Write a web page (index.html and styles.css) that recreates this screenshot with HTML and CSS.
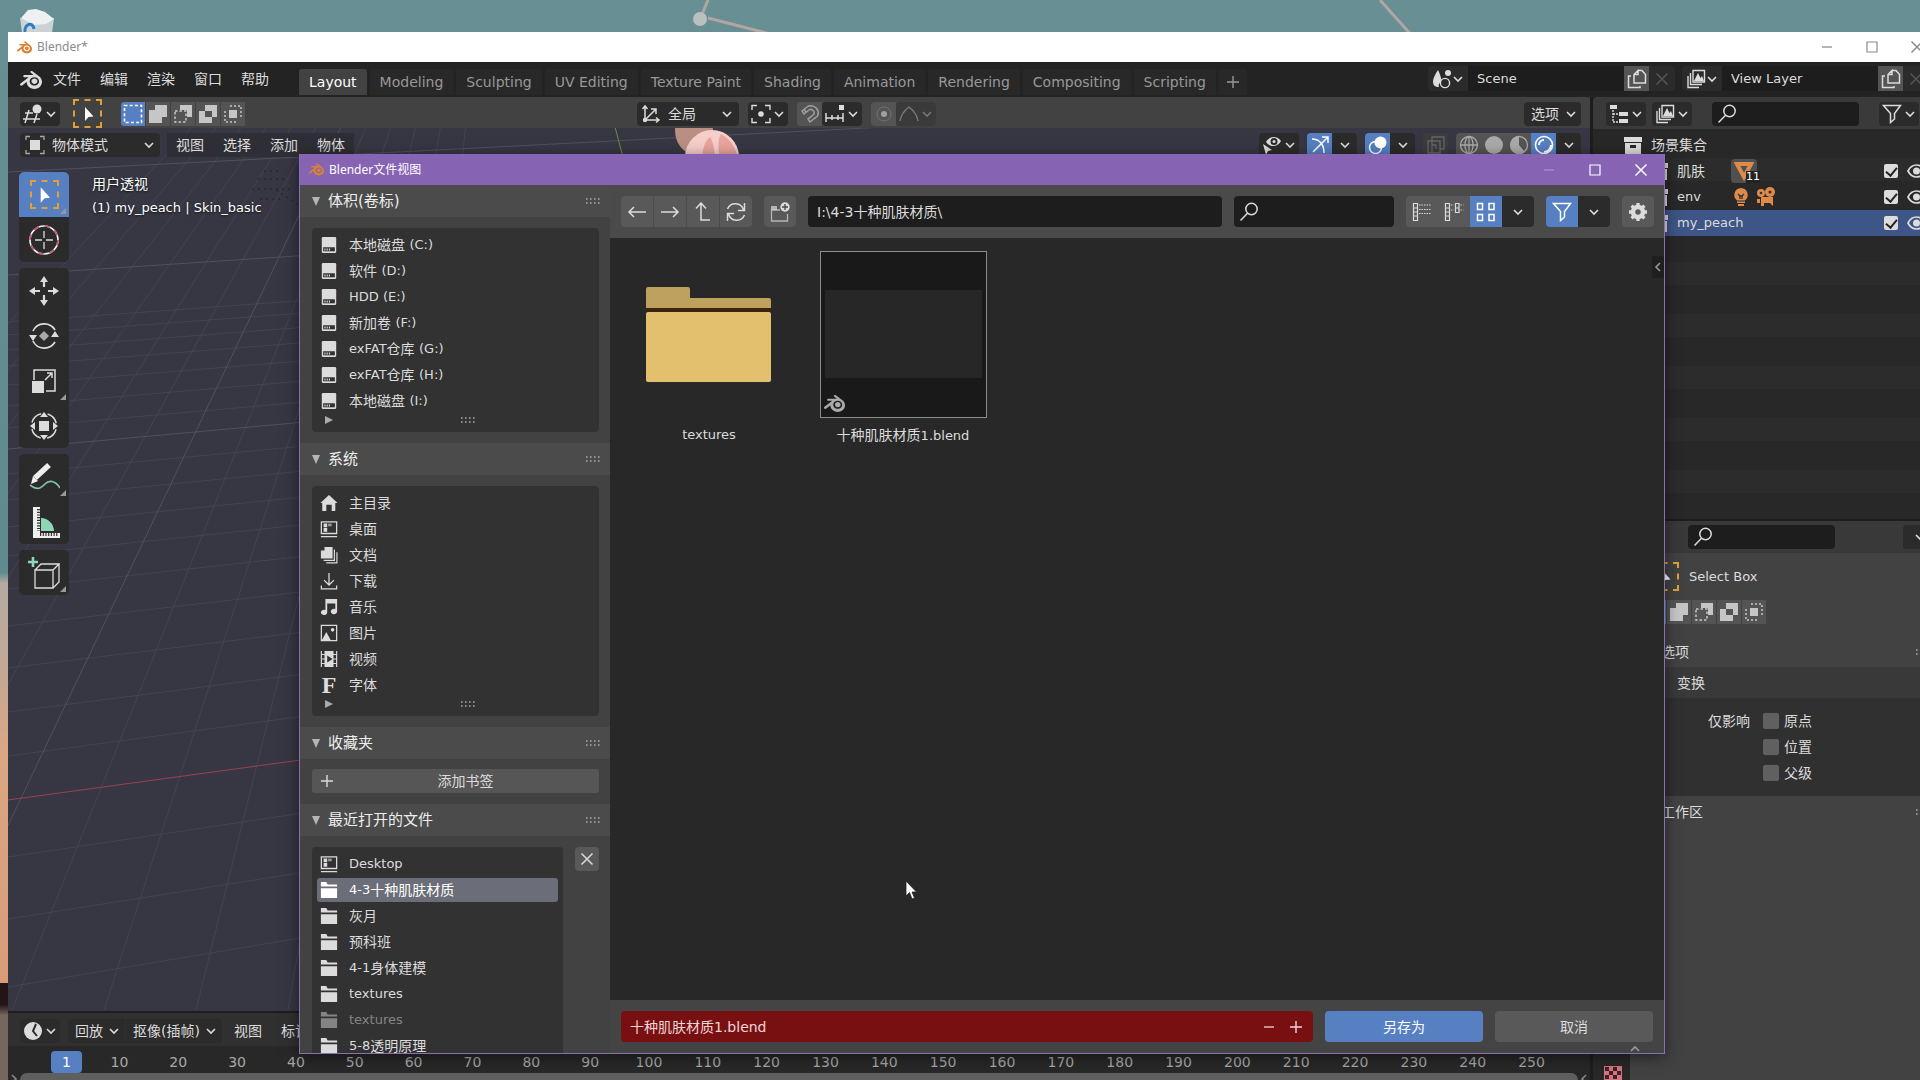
FILE: index.html
```html
<!DOCTYPE html>
<html lang="zh-CN">

<head>
    <meta charset="UTF-8">
    <meta name="viewport" content="width=device-width, initial-scale=1.0">
    <title>Blender</title>
    <link rel="stylesheet" href="styles.css">
</head>

<body>

    <!-- Icon set -->
    <svg class="icon-set" aria-hidden="true">
        <symbol id="blender" viewBox="0 0 24 24"><path fill="currentColor" d="M12.51 13.214c.046-.8.438-1.506 1.03-2.006a3.424 3.424 0 0 1 2.212-.79c.85 0 1.631.3 2.211.79.592.5.983 1.206 1.028 2.005.045.823-.285 1.586-.865 2.153a3.389 3.389 0 0 1-2.374.938 3.393 3.393 0 0 1-2.376-.938c-.58-.567-.91-1.33-.865-2.152M7.35 14.831c.006.314.106.922.256 1.398a7.372 7.372 0 0 0 1.593 2.757 8.227 8.227 0 0 0 2.787 2.001 8.947 8.947 0 0 0 3.66.76 8.964 8.964 0 0 0 3.657-.772 8.285 8.285 0 0 0 2.785-2.01 7.428 7.428 0 0 0 1.592-2.762 6.964 6.964 0 0 0 .25-3.074 7.123 7.123 0 0 0-1.016-2.779 7.764 7.764 0 0 0-1.852-2.043h.002L13.566 2.55l-.02-.015c-.492-.378-1.319-.376-1.86.002-.547.382-.609 1.015-.123 1.415l-.001.001 3.126 2.543-9.53.01h-.013c-.788.001-1.545.518-1.695 1.172-.154.665.38 1.217 1.2 1.22V8.9l4.83-.01-8.62 6.617-.034.025c-.813.622-1.075 1.658-.563 2.313.52.667 1.625.668 2.447.004L7.414 14s-.069.52-.063.831zm12.09 1.741c-.97.988-2.326 1.548-3.795 1.55-1.47.004-2.827-.552-3.797-1.538a4.51 4.51 0 0 1-1.036-1.622 4.282 4.282 0 0 1 .282-3.519 4.702 4.702 0 0 1 1.153-1.371c.942-.768 2.141-1.183 3.396-1.185 1.256-.002 2.455.41 3.398 1.175.48.391.87.854 1.152 1.367a4.28 4.28 0 0 1 .522 1.706 4.236 4.236 0 0 1-.239 1.811 4.54 4.54 0 0 1-1.035 1.626"/></symbol>
        <symbol id="chevron" viewBox="0 0 12 12"><path fill="none" stroke="currentColor" stroke-width="1.6" d="M2 4l4 4 4-4"/></symbol>
        <symbol id="grip" viewBox="0 0 16 8"><path stroke="currentColor" stroke-width="1.6" stroke-dasharray="1.6 2.4" d="M1 2h15M1 6h15"/></symbol>
        <symbol id="search" viewBox="0 0 20 20"><g fill="none" stroke="currentColor" stroke-width="1.5"><circle cx="12.5" cy="7" r="5.7"/><path d="M8.500 11.200L1.500 18.500"/></g></symbol>
        <symbol id="arrow" viewBox="0 0 20 20"><path fill="currentColor" d="M7 3v14l3.500-4 5-.5z"/></symbol>
        <symbol id="editor-3d" viewBox="0 0 20 20"><path fill="none" stroke="currentColor" stroke-width="1.500" d="M2 9h8M0 15h17M6 6L2 19M14 10l-3 9"/><circle fill="currentColor" cx="14" cy="5" r="4.500"/></symbol>
        <symbol id="sel-new" viewBox="0 0 20 20"><rect x="1.500" y="1.500" width="17" height="17" fill="none" stroke="currentColor" stroke-width="1.600" stroke-dasharray="3 2.200"/></symbol>
        <symbol id="sel-add" viewBox="0 0 20 20"><path fill="currentColor" d="M7 1h12v12h-5v6H1V6h6z"/></symbol>
        <symbol id="sel-sub" viewBox="0 0 20 20"><path fill="currentColor" d="M7 1h12v12h-5V6H7z"/><path fill="none" stroke="currentColor" stroke-width="1.500" stroke-dasharray="2.500 2" d="M2 7h11v11H2z"/></symbol>
        <symbol id="sel-diff" viewBox="0 0 20 20"><path fill="currentColor" fill-rule="evenodd" d="M7 1h12v12h-5v6H1V7h6zM7 7v6h7V7z"/></symbol>
        <symbol id="sel-and" viewBox="0 0 20 20"><path fill="currentColor" d="M6 6h8v8H6z"/><path fill="none" stroke="currentColor" stroke-width="1.500" stroke-dasharray="2 2" d="M7 2h11v11M13 18H2V7"/></symbol>
        <symbol id="axes" viewBox="0 0 20 20"><path fill="none" stroke="currentColor" stroke-width="1.500" d="M4 2v14h14M4 16L14 6M1.500 5L4 2l2.500 3M15 13.500l3 2.500-3 2.500M10 5h5v5"/><circle cx="4" cy="16" r="2.200" fill="currentColor"/></symbol>
        <symbol id="pivot" viewBox="0 0 20 20"><circle cx="10" cy="10" r="2.800" fill="currentColor"/><path fill="none" stroke="currentColor" stroke-width="1.400" d="M1 6V1.500h5M14 1.500h5V6M19 14v4.500h-5M6 18.500H1V14"/></symbol>
        <symbol id="magnet" viewBox="0 0 20 20"><path fill="none" stroke="currentColor" stroke-width="1.500" d="M2 7l5-4c4-3 10 0 11 4s-1 6-3 7l-5 4-2-3 5-4c3-3-1-7-4-5L4 10zM4 5l2 3M8 15l3-2"/></symbol>
        <symbol id="snap-inc" viewBox="0 0 20 20"><path fill="none" stroke="currentColor" stroke-width="1.500" d="M1 9v9M7 11v5M13 11v5M18 9v9M1 14h17"/><path fill="currentColor" d="M14 1h5v5h-5z"/></symbol>
        <symbol id="falloff" viewBox="0 0 20 20"><path fill="none" stroke="currentColor" stroke-width="1.500" d="M1 17C2 11 6 6 10 3c4 3 8 8 9 14"/></symbol>
        <symbol id="prop" viewBox="0 0 20 20"><circle cx="10" cy="10" r="7" fill="none" stroke="currentColor" opacity=".4"/><circle cx="10" cy="10" r="3" fill="currentColor"/></symbol>
        <symbol id="scene" viewBox="0 0 20 20"><path fill="currentColor" d="M6 1c2 4 4 9 3 12-2 1-3 3-2 5-4 0-6-2-6-5C1 9 4 4 6 1zM16 1a3 3 0 1 1 0 6 3 3 0 0 1 0-6z"/><circle cx="13" cy="14" r="4.600" fill="none" stroke="currentColor" stroke-width="1.400"/></symbol>
        <symbol id="layers" viewBox="0 0 20 20"><path fill="none" stroke="currentColor" stroke-width="1.400" d="M7 1.500h11.500V13H7zM4.500 4v11.500H16M2 7v11.500h11"/><path fill="currentColor" d="M8 12l4-8 2.500 5L16 7l2 5z"/></symbol>
        <symbol id="copy" viewBox="0 0 20 20"><path fill="none" stroke="currentColor" stroke-width="1.500" d="M11 1.500h4l3.500 4V14H7V5.500l4-4v4H7M4 7H1.500v11.500H13V17"/></symbol>
        <symbol id="cross" viewBox="0 0 20 20"><path fill="none" stroke="currentColor" stroke-width="1.500" d="M4.500 4.500l11 11M15.500 4.500l-11 11"/></symbol>
        <symbol id="square" viewBox="0 0 20 20"><path fill="none" stroke="currentColor" stroke-width="1.200" d="M5 5h10v10H5z"/></symbol>
        <symbol id="dash" viewBox="0 0 20 20"><path fill="none" stroke="currentColor" stroke-width="1.300" d="M5 10h10"/></symbol>
        <symbol id="plus" viewBox="0 0 20 20"><path fill="none" stroke="currentColor" stroke-width="1.400" d="M4 10h12M10 4v12"/></symbol>
        <symbol id="object" viewBox="0 0 20 20"><path fill="currentColor" d="M5 5h10v10H5z"/><path fill="none" stroke="currentColor" stroke-width="1.300" opacity=".7" d="M1 5V1.500h4M15 1.500h4V5M19 15v3.500h-4M5 18.500H1V15"/></symbol>
        <symbol id="eye-arrow" viewBox="0 0 20 20"><path fill="currentColor" fill-rule="evenodd" d="M4 7c3-6 11-7 15-1-3 6-11 7-15 1zm8-4a3.500 3.500 0 1 0 0 7 3.500 3.500 0 0 0 0-7zM1 9l3 11 2-4 4-1z"/><circle cx="12" cy="6.500" r="1.500" fill="currentColor"/></symbol>
        <symbol id="gizmo" viewBox="0 0 20 20"><path fill="none" stroke="currentColor" stroke-width="1.500" d="M2 4c8 0 12 6 12 14M3 17L18 2M12 2h6v6"/></symbol>
        <symbol id="overlay" viewBox="0 0 20 20"><circle cx="12.500" cy="7.500" r="6" fill="currentColor"/><circle cx="7.500" cy="12.500" r="6" fill="none" stroke="currentColor" stroke-width="1.500"/></symbol>
        <symbol id="xray" viewBox="0 0 20 20"><path fill="none" stroke="currentColor" stroke-width="1.300" d="M2 6h12v12H2zM6 18V2h12v12h-4M6 10h4v4"/></symbol>
        <symbol id="wire" viewBox="0 0 20 20"><g fill="none" stroke="currentColor" stroke-width="1.300"><circle cx="10" cy="10" r="8.500"/><ellipse cx="10" cy="10" rx="4" ry="8.500"/><path d="M1.500 10h17M10 1v18"/></g></symbol>
        <symbol id="solid" viewBox="0 0 20 20"><circle cx="10" cy="10" r="9" fill="currentColor"/></symbol>
        <symbol id="material" viewBox="0 0 20 20"><circle cx="10" cy="10" r="8.500" fill="none" stroke="currentColor" stroke-width="1.300"/><path fill="currentColor" d="M10 1v9l6 7A9 9 0 1 1 10 1z"/></symbol>
        <symbol id="rendered" viewBox="0 0 20 20"><circle cx="10" cy="10" r="8.500" fill="none" stroke="currentColor" stroke-width="1.600"/><path fill="none" stroke="currentColor" stroke-width="2" d="M5 10a5 5 0 0 1 5-5M10 17a7 7 0 0 0 7-7" /></symbol>
        <symbol id="outliner" viewBox="0 0 20 20"><path fill="currentColor" d="M1 1h7v4H1zM10 8h9v4h-9zM10 15h9v4h-9z"/><path fill="none" stroke="currentColor" stroke-width="1.400" stroke-dasharray="2 1" d="M4 6v12h5M4 10h5"/></symbol>
        <symbol id="funnel" viewBox="0 0 20 20"><path fill="none" stroke="currentColor" stroke-width="1.500" d="M1.500 1.500h17l-6 8V15L8.500 18.500v-9z"/></symbol>
        <symbol id="box" viewBox="0 0 20 20"><path fill="currentColor" fill-rule="evenodd" d="M1 2h18v5H1zM2 8h16v11H2zM7 10v3h6v-3z"/></symbol>
        <symbol id="mesh" viewBox="0 0 20 20"><path fill="none" stroke="currentColor" stroke-width="4" d="M3 3h14l-7 13z"/></symbol>
        <symbol id="bulb" viewBox="0 0 20 20"><path fill="currentColor" d="M10 1a7 7 0 0 1 4 12.500H6A7 7 0 0 1 10 1zM6 14.500h8V16H6zM7 17h6v2H7z"/><path fill="none" stroke="#333" stroke-width="1.300" d="M7 7l2 2v3M13 7l-2 2v3M8 9h4"/></symbol>
        <symbol id="camera" viewBox="0 0 20 20"><circle cx="5" cy="6" r="4" fill="currentColor"/><circle cx="14" cy="5" r="5" fill="currentColor"/><path fill="currentColor" d="M5 10h12v9l-3-3H8v3H5zM1 12h3v4H1z"/><circle cx="5" cy="6" r="1.300" fill="#333"/><circle cx="14" cy="5" r="1.600" fill="#333"/></symbol>
        <symbol id="eye" viewBox="0 0 20 20"><path fill="none" stroke="currentColor" stroke-width="1.700" d="M2 10c4-8 13-8 17 0-4 8-13 8-17 0z"/><circle cx="10.500" cy="10" r="3.500" fill="currentColor"/></symbol>
        <symbol id="clock" viewBox="0 0 20 20"><circle cx="10" cy="10" r="9" fill="currentColor"/><path fill="none" stroke="#2b2b2b" stroke-width="2" d="M13 3l-3 7 4 5"/></symbol>
        <symbol id="left" viewBox="0 0 20 20"><path fill="none" stroke="currentColor" stroke-width="1.500" d="M19 10H2M7 5l-5 5 5 5"/></symbol>
        <symbol id="right" viewBox="0 0 20 20"><path fill="none" stroke="currentColor" stroke-width="1.500" d="M1 10h17M13 5l5 5-5 5"/></symbol>
        <symbol id="up" viewBox="0 0 20 20"><path fill="none" stroke="currentColor" stroke-width="1.500" d="M3 6.500L8 1l5 5.500M8 1v17h9"/></symbol>
        <symbol id="refresh" viewBox="0 0 20 20"><path fill="none" stroke="currentColor" stroke-width="1.500" d="M1.500 7a8.500 8.500 0 0 1 16 1M18.500 1v7.500H12M18.500 13a8.500 8.500 0 0 1-16-1M1.500 19v-7.500H8"/></symbol>
        <symbol id="newfolder" viewBox="0 0 20 20"><path fill="none" stroke="currentColor" stroke-width="1.300" opacity=".7" d="M10 8H1.500v11h16v-7"/><path fill="currentColor" opacity=".7" d="M1 4h6v4H1z"/><circle cx="15" cy="5" r="4.700" fill="currentColor"/><path stroke="#444" stroke-width="1.300" d="M12 5h6M15 2v6"/></symbol>
        <symbol id="list-v" viewBox="0 0 20 20"><path fill="none" stroke="currentColor" stroke-width="1.200" d="M1.500 1.500h4v17h-4zM1.500 6h4M1.500 10h4M1.500 14h4"/><path stroke="currentColor" stroke-width="1.200" stroke-dasharray="1.500 1" d="M7 3h12M7 7.500h12M7 11.500h12"/></symbol>
        <symbol id="list-h" viewBox="0 0 20 20"><path fill="none" stroke="currentColor" stroke-width="1.200" d="M1.500 1.500h4v17h-4zM1.500 6h4M1.500 10h4M1.500 14h4M11.500 1.500h3.500v9h-3.500zM11.500 6H15"/><path stroke="currentColor" stroke-width="1.200" stroke-dasharray="1.300 1.300" d="M7 3h3M7 8h3M16.500 3h3M16.500 8h3"/></symbol>
        <symbol id="thumbs" viewBox="0 0 20 20"><path fill="none" stroke="currentColor" stroke-width="1.500" d="M1.500 1.500h5v6h-5zM13 1.500h5v6h-5zM1.500 12.500h5v6h-5zM13 12.500h5v6h-5z"/></symbol>
        <symbol id="gear" viewBox="0 0 20 20"><circle cx="10" cy="10" r="5" fill="none" stroke="currentColor" stroke-width="4.500"/><path stroke="currentColor" stroke-width="3.400" d="M10 1v3M10 16v3M1 10h3M16 10h3M3.600 3.600l2 2M14.400 14.400l2 2M3.600 16.400l2-2M14.400 5.600l2-2"/></symbol>
        <symbol id="drive" viewBox="0 0 20 20"><rect x="2" y="1" width="16" height="18" rx="1.500" fill="currentColor"/><path fill="#323232" d="M3.500 12.500h13V17h-13z"/><path stroke="currentColor" stroke-width="1.300" d="M5.500 14v2M8 14v2M10.500 14v2"/></symbol>
        <symbol id="home" viewBox="0 0 20 20"><path fill="currentColor" d="M10 1l9.500 9H17v9h-4v-7H7v7H2.500v-9H.5z"/></symbol>
        <symbol id="desktop" viewBox="0 0 20 20"><path fill="none" stroke="currentColor" stroke-width="1.400" d="M1.500 2h17v13h-17zM1 18.500h18"/><path fill="currentColor" d="M4 4h4v4H4zM4 9h4v4H4z"/><path fill="currentColor" opacity=".6" d="M9 4h4v3H9z"/></symbol>
        <symbol id="docs" viewBox="0 0 20 20"><path fill="currentColor" d="M5 1h9v13H1V5h4z"/><path fill="none" stroke="currentColor" stroke-width="1.300" d="M16 4v12H4M18.800 7v11.800H7"/></symbol>
        <symbol id="download" viewBox="0 0 20 20"><path fill="none" stroke="currentColor" stroke-width="1.400" d="M10 1v13M4.500 9l5.500 5.500L15.500 9M1.500 15v3.800h17V15"/></symbol>
        <symbol id="music" viewBox="0 0 20 20"><path fill="currentColor" d="M6 1h13v14a3.500 3 0 1 1-2-2.700V6H8v10a3.500 3 0 1 1-2-2.700z"/></symbol>
        <symbol id="image" viewBox="0 0 20 20"><path fill="none" stroke="currentColor" stroke-width="1.400" d="M1.500 1.500h17v17h-17z"/><path fill="currentColor" d="M2 18l5-9 5 9zM14 4.500a2 2 0 1 1 0 4 2 2 0 0 1 0-4z"/></symbol>
        <symbol id="movie" viewBox="0 0 20 20"><path fill="currentColor" fill-rule="evenodd" d="M5 1h10v18H5zM8 6v8l6-4z"/><path stroke="currentColor" stroke-width="1.300" d="M1.500 1v18M18.500 1v18M1 5h5M14 5h5M1 10h5M1 15h5M14 15h5M14 10h5"/></symbol>
        <symbol id="folder" viewBox="0 0 20 20"><path fill="currentColor" d="M1 1h6l1.500 3H19v2H1zM1 8h18v11H1z"/></symbol>
        <symbol id="cursor3d" viewBox="0 0 32 32"><circle cx="16" cy="16" r="14" fill="none" stroke="#eee" stroke-width="1.700"/><circle cx="16" cy="16" r="14" fill="none" stroke="#c0566a" stroke-width="1.700" stroke-dasharray="5.500 5.500"/><path stroke="#ddd" stroke-width="1.300" d="M16 7v7M16 18v7M7 16h7M18 16h7"/></symbol>
        <symbol id="move" viewBox="0 0 32 32"><path fill="currentColor" d="M16 1l4 6h-8zM16 31l4-6h-8zM1 16l6-4v8zM31 16l-6-4v8z"/><path stroke="currentColor" stroke-width="2.200" d="M16 7v5M16 20v5M7 16h5M20 16h5"/></symbol>
        <symbol id="rotate" viewBox="0 0 32 32"><path fill="none" stroke="currentColor" stroke-width="1.700" d="M5 11a12.500 12.500 0 0 1 22-1M27 22a12.500 12.500 0 0 1-22-1"/><path fill="currentColor" d="M1 15h8l-4 6zM31 17h-8l4-6z"/><path fill="#aaa" d="M16 11l5 5-5 5-5-5z"/></symbol>
        <symbol id="scale" viewBox="0 0 32 32"><path fill="none" stroke="currentColor" stroke-width="1.500" d="M6 15V5h21v21H18M17 15l7-7M19 8h5v5"/><path fill="currentColor" d="M4 16h12v12H4z"/></symbol>
        <symbol id="transform" viewBox="0 0 32 32"><circle cx="16" cy="16" r="12.500" fill="none" stroke="currentColor" stroke-width="1.500" stroke-dasharray="13 6.635" stroke-dashoffset="-3.300"/><path fill="currentColor" d="M11 11h10v10H11zM16 2l4 5h-8zM16 30l4-5h-8zM2 16l5-4v8zM30 16l-5-4v8z"/></symbol>
        <symbol id="annotate" viewBox="0 0 32 32"><path stroke="#eee" stroke-width="5.500" d="M21 4L7 17"/><path fill="#eee" d="M5 15l5 5-7 3z"/><path fill="none" stroke="#7fc8a9" stroke-width="1.600" d="M2 24c8 6 11 3 15-1s10-4 15 4"/></symbol>
        <symbol id="measure" viewBox="0 0 32 32"><path fill="#eee" d="M5 1h7v31H5zM5 27h27v5H5z"/><path fill="#8fd6b5" d="M13 12c7 0 13 6 13 13H13z"/><path stroke="#333" stroke-width="3" stroke-dasharray="1.200 1.500" d="M10.500 3v22M12 28.500h18"/></symbol>
        <symbol id="addcube" viewBox="0 0 32 32"><path fill="none" stroke="#ddd" stroke-width="1.300" d="M7 13h18v18H7zM7 13l6-6h18l-6 6M31 7v18l-6 6"/><path stroke="#8fd6b5" stroke-width="2.600" d="M5 0v10M0 5h10"/></symbol>
    </svg>

    <div class="desktop">
        <svg class="wallpaper">
            <path class="branch" d="M701 17L708 0M708 18l70 18M1380 0l34 38"/>
            <circle cx="700" cy="19" r="7"/>
        </svg>
        <svg class="recycle" viewBox="0 0 36 32">
            <path fill="#ccd3d7" d="M1 10h34l-3 22H4z"/>
            <path fill="#eef1f2" d="M2 10l7-8 8-1 9 3 9 7-8 5-12 1z"/>
            <path fill="none" stroke="#2f7fc0" stroke-width="3" d="M6 24c-1-8 8-11 9-3"/>
        </svg>

        <!-- Main window -->
        <div class="window">
            <div class="titlebar">
                <svg class="logo"><use href="#blender"/></svg>
                <span>Blender*</span>
                <div class="controls">
                    <button aria-label="最小化"><svg><use href="#dash"/></svg></button>
                    <button aria-label="最大化"><svg><use href="#square"/></svg></button>
                    <button aria-label="关闭"><svg><use href="#cross"/></svg></button>
                </div>
            </div>

            <div class="menubar">
                <svg class="app"><use href="#blender"/></svg>
                <nav class="menus">
                    <button>文件</button><button>编辑</button><button>渲染</button><button>窗口</button><button>帮助</button>
                </nav>
                <div class="tabs">
                    <button class="active">Layout</button>
                    <button>Modeling</button>
                    <button>Sculpting</button>
                    <button>UV Editing</button>
                    <button>Texture Paint</button>
                    <button>Shading</button>
                    <button>Animation</button>
                    <button>Rendering</button>
                    <button>Compositing</button>
                    <button>Scripting</button>
                    <button class="add" aria-label="添加工作区"><svg><use href="#plus"/></svg></button>
                </div>
                <div class="datablock">
                    <button class="pick" aria-label="场景"><svg><use href="#scene"/></svg><svg class="chev"><use href="#chevron"/></svg></button>
                    <input type="text" value="Scene" aria-label="场景名称">
                    <button class="sq" aria-label="新建场景"><svg><use href="#copy"/></svg></button>
                    <button class="del" aria-label="删除场景"><svg><use href="#cross"/></svg></button>
                </div>
                <div class="datablock">
                    <button class="pick" aria-label="视图层"><svg><use href="#layers"/></svg><svg class="chev"><use href="#chevron"/></svg></button>
                    <input type="text" value="View Layer" aria-label="视图层名称">
                    <button class="sq" aria-label="新建视图层"><svg><use href="#copy"/></svg></button>
                    <button class="del" aria-label="删除视图层"><svg><use href="#cross"/></svg></button>
                </div>
            </div>

            <div class="workspace">
                <div class="left-area">
                    <section class="viewport">
                        <svg class="grid">
                            <path class="minor" d="M0 225L7000 -284M0 238L7000 -284M0 253L7000 -284M0 269L7000 -284M0 288L7000 -284M0 309L7000 -284M0 331L7000 -284M0 377L7000 -284M0 403L7000 -284M0 430L7000 -284M0 459L7000 -284M0 492L7000 -284M0 529L7000 -284M0 571L7000 -284M0 615L7000 -284M0 659L7000 -284M0 760L7000 -284M0 822L7000 -284M0 890L7000 -284"/>
                            <path class="minor" d="M489 -297L-640 913M489 -297L-548 913M489 -297L-456 913M489 -297L-364 913M489 -297L-272 913M489 -297L-180 913M489 -297L4 913M489 -297L96 913M489 -297L188 913M489 -297L280 913M489 -297L372 913"/>
                            <path class="major" d="M489 -297L-88 913M0 178L7000 -284M0 352L7000 -284M0 75L7000 -284"/>
                            <path class="x-axis" d="M0 703L300 662"/>
                            <path class="y-axis" d="M607 30L615 60"/>
                            <path class="lamp" d="M268 93l30 20M250 82h30M244 92h40M252 102h24M256 74h18"/>
                            <ellipse cx="686" cy="33" rx="19" ry="24" fill="#b98f84"/>
                            <circle cx="704" cy="60" r="27" fill="#f6cfcb"/>
                            <path fill="#eba39e" d="M694 62c1-14 4-19 8-22 3 4 4 10 5 22zM712 62c-3-15-1-22 1-25 9 5 15 13 17 25z"/>
                        </svg>
                        <div class="header">
                            <button class="dark" aria-label="编辑器类型"><svg><use href="#editor-3d"/></svg><svg class="chev"><use href="#chevron"/></svg></button>
                            <span class="tool-icon"><svg><use href="#arrow"/></svg></span>
                            <div class="modes">
                                <button class="on" aria-label="新建选择"><svg><use href="#sel-new"/></svg></button>
                                <button aria-label="扩展"><svg><use href="#sel-add"/></svg></button>
                                <button aria-label="减去"><svg><use href="#sel-sub"/></svg></button>
                                <button aria-label="反转"><svg><use href="#sel-diff"/></svg></button>
                                <button aria-label="相交"><svg><use href="#sel-and"/></svg></button>
                            </div>
                            <div class="transform-tools">
                                <label class="dark orient"><svg><use href="#axes"/></svg><select aria-label="坐标系"><option>全局</option></select><svg class="chev"><use href="#chevron"/></svg></label>
                                <button class="dark" aria-label="轴心点"><svg><use href="#pivot"/></svg><svg class="chev"><use href="#chevron"/></svg></button>
                                <div class="pair">
                                    <button class="sq" aria-label="吸附"><svg><use href="#magnet"/></svg></button>
                                    <button class="dark" aria-label="吸附类型"><svg><use href="#snap-inc"/></svg><svg class="chev"><use href="#chevron"/></svg></button>
                                </div>
                                <div class="pair dim">
                                    <button class="sq" aria-label="衰减编辑"><svg><use href="#prop"/></svg></button>
                                    <button class="dark" aria-label="衰减类型"><svg><use href="#falloff"/></svg><svg class="chev"><use href="#chevron"/></svg></button>
                                </div>
                            </div>
                            <button class="dark options">选项<svg class="chev"><use href="#chevron"/></svg></button>
                        </div>
                        <div class="subheader">
                            <label class="dark mode"><svg><use href="#object"/></svg><select aria-label="模式"><option>物体模式</option></select><svg class="chev"><use href="#chevron"/></svg></label>
                            <nav class="menus">
                                <button>视图</button><button>选择</button><button>添加</button><button>物体</button>
                            </nav>
                            <div class="display">
                                <button class="dark" aria-label="可见性"><svg><use href="#eye-arrow"/></svg><svg class="chev"><use href="#chevron"/></svg></button>
                                <div class="pair">
                                    <button class="sq on" aria-label="控件"><svg><use href="#gizmo"/></svg></button>
                                    <button class="drop" aria-label="控件选项"><svg class="chev"><use href="#chevron"/></svg></button>
                                </div>
                                <div class="pair">
                                    <button class="sq on" aria-label="叠加层"><svg><use href="#overlay"/></svg></button>
                                    <button class="drop" aria-label="叠加层选项"><svg class="chev"><use href="#chevron"/></svg></button>
                                </div>
                                <button class="sq xray" aria-label="透视模式"><svg><use href="#xray"/></svg></button>
                                <div class="pair shading">
                                    <button class="sq" aria-label="线框"><svg><use href="#wire"/></svg></button>
                                    <button class="sq" aria-label="实体"><svg><use href="#solid"/></svg></button>
                                    <button class="sq" aria-label="材质预览"><svg><use href="#material"/></svg></button>
                                    <button class="sq on" aria-label="渲染"><svg><use href="#rendered"/></svg></button>
                                    <button class="drop" aria-label="着色选项"><svg class="chev"><use href="#chevron"/></svg></button>
                                </div>
                            </div>
                        </div>
                        <div class="stage">
                            <div class="toolbar">
                                <div class="tools">
                                    <button class="on more" aria-label="框选"><span class="tool-icon"><svg><use href="#arrow"/></svg></span></button>
                                    <button aria-label="游标"><svg><use href="#cursor3d"/></svg></button>
                                </div>
                                <div class="tools">
                                    <button aria-label="移动"><svg><use href="#move"/></svg></button>
                                    <button aria-label="旋转"><svg><use href="#rotate"/></svg></button>
                                    <button class="more" aria-label="缩放"><svg><use href="#scale"/></svg></button>
                                    <button aria-label="变换"><svg><use href="#transform"/></svg></button>
                                </div>
                                <div class="tools">
                                    <button class="more" aria-label="标注"><svg><use href="#annotate"/></svg></button>
                                    <button aria-label="测量"><svg><use href="#measure"/></svg></button>
                                </div>
                                <div class="tools">
                                    <button class="more" aria-label="添加立方体"><svg><use href="#addcube"/></svg></button>
                                </div>
                            </div>
                            <div class="view-info">
                                <p>用户透视</p>
                                <p class="en">(1) my_peach | Skin_basic</p>
                            </div>
                        </div>
                    </section>

                    <section class="timeline">
                        <div class="timeline-header">
                            <button class="dark" aria-label="时间线"><svg><use href="#clock"/></svg><svg class="chev"><use href="#chevron"/></svg></button>
                            <div class="pair playback">
                                <button class="dark">回放<svg class="chev"><use href="#chevron"/></svg></button>
                                <button class="dark">抠像(插帧)<svg class="chev"><use href="#chevron"/></svg></button>
                            </div>
                            <nav class="menus"><button>视图</button><button>标记</button></nav>
                        </div>
                        <div class="ruler">
                            <span class="frame">1</span>
                            <div class="ticks">
                                <span>10</span><span>20</span><span>30</span><span>40</span><span>50</span>
                                <span>60</span><span>70</span><span>80</span><span>90</span><span>100</span>
                                <span>110</span><span>120</span><span>130</span><span>140</span><span>150</span>
                                <span>160</span><span>170</span><span>180</span><span>190</span><span>200</span>
                                <span>210</span><span>220</span><span>230</span><span>240</span><span>250</span>
                            </div>
                        </div>
                        <div class="scroll-row">
                            <svg class="chev next"><use href="#chevron"/></svg>
                            <div class="scrollbar"></div>
                            <svg class="chev prev"><use href="#chevron"/></svg>
                        </div>
                    </section>
                </div>

                <div class="right-area">
                    <section class="outliner">
                        <div class="outliner-header">
                            <button class="dark" aria-label="大纲视图"><svg><use href="#outliner"/></svg><svg class="chev"><use href="#chevron"/></svg></button>
                            <button class="dark" aria-label="显示模式"><svg><use href="#layers"/></svg><svg class="chev"><use href="#chevron"/></svg></button>
                            <label class="search"><svg><use href="#search"/></svg><input type="text" aria-label="搜索大纲"></label>
                            <button class="dark" aria-label="过滤"><svg><use href="#funnel"/></svg><svg class="chev"><use href="#chevron"/></svg></button>
                        </div>
                        <div class="rows">
                            <div class="row root"><svg><use href="#box"/></svg><span>场景集合</span></div>
                            <div class="row"><svg><use href="#box"/></svg><span class="name">肌肤</span><span class="badge"><svg><use href="#mesh"/></svg><b>11</b></span><input type="checkbox" aria-label="肌肤" checked><svg><use href="#eye"/></svg></div>
                            <div class="row"><svg><use href="#box"/></svg><span class="name en">env</span><span class="kinds"><svg><use href="#bulb"/></svg><svg><use href="#camera"/></svg></span><input type="checkbox" aria-label="env" checked><svg><use href="#eye"/></svg></div>
                            <div class="row selected"><svg><use href="#box"/></svg><span class="name en">my_peach</span><input type="checkbox" aria-label="my_peach" checked><svg><use href="#eye"/></svg></div>
                        </div>
                    </section>

                    <section class="properties">
                        <div class="prop-header">
                            <label class="search"><svg><use href="#search"/></svg><input type="text" aria-label="搜索属性"></label>
                            <button class="dark" aria-label="属性选项"><svg class="chev"><use href="#chevron"/></svg></button>
                        </div>
                        <div class="prop-main">
                            <div class="prop-tabs"><button class="texture" aria-label="纹理"></button></div>
                            <div class="prop-body">
                                <div class="active-tool"><span class="tool-icon"><svg><use href="#arrow"/></svg></span><span class="en">Select Box</span></div>
                                <div class="modes">
                                    <button class="on" aria-label="新建选择"><svg><use href="#sel-new"/></svg></button>
                                    <button aria-label="扩展"><svg><use href="#sel-add"/></svg></button>
                                    <button aria-label="减去"><svg><use href="#sel-sub"/></svg></button>
                                    <button aria-label="反转"><svg><use href="#sel-diff"/></svg></button>
                                    <button aria-label="相交"><svg><use href="#sel-and"/></svg></button>
                                </div>
                                <h3>选项<svg class="grip"><use href="#grip"/></svg></h3>
                                <h4>变换</h4>
                                <fieldset>
                                    <legend>仅影响</legend>
                                    <label><input type="checkbox">原点</label>
                                    <label><input type="checkbox">位置</label>
                                    <label><input type="checkbox">父级</label>
                                </fieldset>
                                <h3>工作区<svg class="grip"><use href="#grip"/></svg></h3>
                            </div>
                        </div>
                    </section>
                </div>
            </div>
        </div>

        <!-- File browser -->
        <div class="dialog">
            <div class="titlebar">
                <svg class="logo"><use href="#blender"/></svg>
                <span>Blender文件视图</span>
                <div class="controls">
                    <button class="faint" aria-label="最小化"><svg><use href="#dash"/></svg></button>
                    <button aria-label="最大化"><svg><use href="#square"/></svg></button>
                    <button aria-label="关闭"><svg><use href="#cross"/></svg></button>
                </div>
            </div>

            <div class="browser">
                <aside class="sidebar">
                    <h2>体积(卷标)<svg class="grip"><use href="#grip"/></svg></h2>
                    <div class="panel">
                        <ul class="places">
                            <li><svg><use href="#drive"/></svg>本地磁盘 <span class="en">(C:)</span></li>
                            <li><svg><use href="#drive"/></svg>软件 <span class="en">(D:)</span></li>
                            <li><svg><use href="#drive"/></svg><span class="en">HDD (E:)</span></li>
                            <li><svg><use href="#drive"/></svg>新加卷 <span class="en">(F:)</span></li>
                            <li><svg><use href="#drive"/></svg><span class="en">exFAT</span>仓库 <span class="en">(G:)</span></li>
                            <li><svg><use href="#drive"/></svg><span class="en">exFAT</span>仓库 <span class="en">(H:)</span></li>
                            <li><svg><use href="#drive"/></svg>本地磁盘 <span class="en">(I:)</span></li>
                            <li class="resize"><svg class="grip"><use href="#grip"/></svg></li>
                        </ul>
                    </div>

                    <h2>系统<svg class="grip"><use href="#grip"/></svg></h2>
                    <div class="panel">
                        <ul class="places">
                            <li><svg><use href="#home"/></svg>主目录</li>
                            <li><svg><use href="#desktop"/></svg>桌面</li>
                            <li><svg><use href="#docs"/></svg>文档</li>
                            <li><svg><use href="#download"/></svg>下载</li>
                            <li><svg><use href="#music"/></svg>音乐</li>
                            <li><svg><use href="#image"/></svg>图片</li>
                            <li><svg><use href="#movie"/></svg>视频</li>
                            <li><b class="font-icon">F</b>字体</li>
                            <li class="resize"><svg class="grip"><use href="#grip"/></svg></li>
                        </ul>
                    </div>

                    <h2>收藏夹<svg class="grip"><use href="#grip"/></svg></h2>
                    <div class="panel favorites">
                        <button class="bookmark"><svg><use href="#plus"/></svg><span>添加书签</span></button>
                    </div>

                    <h2>最近打开的文件<svg class="grip"><use href="#grip"/></svg></h2>
                    <div class="panel recent">
                        <ul class="places">
                            <li><svg><use href="#desktop"/></svg><span class="en">Desktop</span></li>
                            <li class="selected"><svg><use href="#folder"/></svg><span class="en">4-3</span>十种肌肤材质</li>
                            <li><svg><use href="#folder"/></svg>灰月</li>
                            <li><svg><use href="#folder"/></svg>预科班</li>
                            <li><svg><use href="#folder"/></svg><span class="en">4-1</span>身体建模</li>
                            <li><svg><use href="#folder"/></svg><span class="en">textures</span></li>
                            <li class="missing"><svg><use href="#folder"/></svg><span class="en">textures</span></li>
                            <li><svg><use href="#folder"/></svg><span class="en">5-8</span>透明原理</li>
                        </ul>
                        <button class="clear" aria-label="清除"><svg><use href="#cross"/></svg></button>
                    </div>
                </aside>

                <main class="files">
                    <div class="path-bar">
                        <div class="pair nav">
                            <button aria-label="后退"><svg><use href="#left"/></svg></button>
                            <button aria-label="前进"><svg><use href="#right"/></svg></button>
                            <button aria-label="上级目录"><svg><use href="#up"/></svg></button>
                            <button aria-label="刷新"><svg><use href="#refresh"/></svg></button>
                        </div>
                        <button aria-label="新建目录"><svg><use href="#newfolder"/></svg></button>
                        <input class="path" type="text" value="I:\4-3十种肌肤材质\" aria-label="路径">
                        <label class="search"><svg><use href="#search"/></svg><input type="text" aria-label="搜索文件"></label>
                        <div class="pair">
                            <button aria-label="垂直列表"><svg><use href="#list-v"/></svg></button>
                            <button aria-label="水平列表"><svg><use href="#list-h"/></svg></button>
                            <button class="on" aria-label="缩略图"><svg><use href="#thumbs"/></svg></button>
                            <button class="drop" aria-label="显示设置"><svg class="chev"><use href="#chevron"/></svg></button>
                        </div>
                        <div class="pair">
                            <button class="on" aria-label="过滤"><svg><use href="#funnel"/></svg></button>
                            <button class="drop" aria-label="过滤设置"><svg class="chev"><use href="#chevron"/></svg></button>
                        </div>
                        <button aria-label="选项"><svg><use href="#gear"/></svg></button>
                    </div>

                    <div class="file-grid">
                        <figure>
                            <div class="thumb">
                                <svg viewBox="0 0 167 167">
                                    <path fill="#bfa15f" d="M20 38q0-2 2-2h40q2 0 2 2v9h79q2 0 2 2v10H20z"/>
                                    <path fill="#3a2410" d="M20 57h125v4H20z"/>
                                    <rect x="20" y="61" width="125" height="70" rx="2" fill="#e2c06e"/>
                                </svg>
                            </div>
                            <figcaption class="en">textures</figcaption>
                        </figure>
                        <figure>
                            <div class="thumb blend"><div class="preview"></div><svg><use href="#blender"/></svg></div>
                            <figcaption>十种肌肤材质<span class="en">1.blend</span></figcaption>
                        </figure>
                        <button class="region" aria-label="展开侧栏"><svg class="chev"><use href="#chevron"/></svg></button>
                    </div>

                    <div class="save-bar">
                        <div class="filename">
                            <input type="text" value="十种肌肤材质1.blend" aria-label="文件名">
                            <button aria-label="减少"><svg><use href="#dash"/></svg></button>
                            <button aria-label="增加"><svg><use href="#plus"/></svg></button>
                        </div>
                        <button class="save">另存为</button>
                        <button class="cancel">取消</button>
                    </div>
                </main>
            </div>
            <svg class="chev expand"><use href="#chevron"/></svg>
        </div>

        <svg class="pointer" viewBox="0 0 12 20"><path fill="#fff" stroke="#222" stroke-width=".8" d="M1 1v15l3.500-3.500L7 19l2.500-1L7 12h4.500z"/></svg>
    </div>

</body>

</html>
```
FILE: styles.css
```css
/* Reset */
* {
    box-sizing: border-box;
    margin: 0;
    padding: 0;
}

body {
    font-family: "DejaVu Sans", "Noto Sans CJK SC", sans-serif;
    font-size: 14px;
    line-height: 20px;
    color: #dcdcdc;
    overflow: hidden;
}

button,
input,
select {
    font: inherit;
    color: inherit;
    border: none;
    background: none;
    outline: none;
}

button {
    display: flex;
    align-items: center;
    justify-content: center;
    white-space: nowrap;
}

input[type="text"] {
    min-width: 0;
}

select {
    appearance: none;
    flex: 1;
    min-width: 0;
}

svg {
    width: 20px;
    height: 20px;
    flex: none;
}

ul {
    list-style: none;
}

.icon-set {
    position: absolute;
    width: 0;
    height: 0;
}

.en {
    font-size: 13px;
}

svg.chev {
    width: 12px;
    height: 12px;
}

svg.grip {
    width: 16px;
    height: 8px;
    color: #a8a8a8;
}

/* Desktop */
.desktop {
    position: relative;
    height: 100vh;
    overflow: hidden;
    background: linear-gradient(#678f94 0, #5f8b8e 53%, #b3aaa1 54%, #c4a894 62%, #dba684 70%, #d89c78 91%, #241418 91%, #241418 93%, #75665e 94%);
}

.wallpaper {
    position: absolute;
    top: 0;
    left: 0;
    width: 100%;
    height: 32px;
    fill: #b9c0c0;
}

.branch {
    fill: none;
    stroke: #b3a5a1;
    stroke-width: 3;
}

.recycle {
    position: absolute;
    top: 8px;
    left: 19px;
    width: 36px;
    height: 32px;
}

/* Main window */
.window {
    position: absolute;
    top: 32px;
    bottom: 0;
    left: 8px;
    right: -19px;
    display: flex;
    flex-direction: column;
    background: #1d1d1d;
}

.titlebar {
    display: flex;
    align-items: center;
    height: 30px;
    padding-left: 9px;
    gap: 5px;
    flex: none;
    background: #fff;
    color: #8c8c8c;
    font-family: "Noto Sans", "Noto Sans CJK SC", sans-serif;
    font-size: 12px;
}

.titlebar .logo {
    width: 15px;
    height: 15px;
    color: #d98234;
}

.controls {
    display: flex;
    margin-left: auto;
}

.controls button {
    width: 45px;
    height: 30px;
}

.controls .faint {
    opacity: .3;
}

/* Menu bar */
.menubar {
    display: flex;
    align-items: center;
    height: 35px;
    padding: 0 10px 0 12px;
    flex: none;
    background: #232323;
}

.menubar .app {
    width: 22px;
    height: 22px;
}

.menus {
    display: flex;
    gap: 1px;
}

.menus button {
    padding: 0 9px;
    height: 24px;
}

.menubar .menus {
    margin: 0 0 2px 2px;
}

.tabs {
    display: flex;
    align-self: flex-end;
    gap: 3px;
    margin: 0 auto 2px 21px;
    color: #989898;
}

.tabs button {
    height: 26px;
    padding: 0 10px;
    border-radius: 3px 3px 0 0;
    background: #282828;
}

.tabs .active {
    background: #424242;
    color: #fff;
}

.tabs .add {
    padding: 0 4px;
}

.datablock {
    display: flex;
    height: 25px;
    margin: 0 0 2px 7px;
    border-radius: 4px;
    background: #2b2b2b;
    font-size: 13px;
}

.datablock .pick {
    width: 40px;
}

.datablock input {
    width: 156px;
    padding: 0 9px;
    background: #1d1d1d;
}

.datablock .del {
    width: 26px;
    color: #555;
}

.sq {
    width: 25px;
    height: 24px;
    background: #545454;
}

.datablock .sq {
    height: 25px;
}

.on {
    background: #5680c2;
    color: #fff;
}

.dark {
    display: flex;
    align-items: center;
    gap: 2px;
    height: 24px;
    padding: 0 3px;
    border-radius: 4px;
    background: #2b2b2b;
}

.drop {
    width: 25px;
    height: 24px;
    background: #2b2b2b;
}

.pair {
    display: flex;
    border-radius: 4px;
    overflow: hidden;
}

/* Workspace */
.workspace {
    display: flex;
    flex: 1;
    gap: 3px;
    min-height: 0;
}

.left-area {
    display: flex;
    flex-direction: column;
    flex: 1;
    gap: 2px;
    min-width: 0;
}

.viewport {
    position: relative;
    flex: 1;
    min-height: 0;
    background: #363743;
}

.grid {
    position: absolute;
    top: 0;
    left: 0;
    width: 100%;
    height: 100%;
    fill: none;
}

.minor {
    stroke: #434450;
}

.major {
    stroke: #50515c;
}

.x-axis {
    stroke: #9a4150;
}

.y-axis {
    stroke: #6b8f3c;
}

.lamp {
    stroke: #1f2029;
    stroke-dasharray: 2 4;
}

.header,
.subheader {
    position: relative;
    display: flex;
    align-items: center;
    height: 31px;
    padding: 2px 9px 0 12px;
}

.header {
    background: #424242;
    border-radius: 4px 4px 0 0;
}

.tool-icon {
    display: flex;
    align-items: center;
    justify-content: center;
    width: 29px;
    height: 29px;
    border: 2px dashed #dfa03a;
    color: #fff;
}

.header .tool-icon {
    margin: 0 19px 0 13px;
}

.modes {
    display: flex;
    gap: 1px;
    color: #c6c6c6;
}

.header .modes {
    flex: 2 0 auto;
}

.modes button {
    width: 24px;
    height: 24px;
    background: #545454;
}

.modes .on {
    background: #5680c2;
    color: #fff;
    border-radius: 3px 0 0 3px;
}

.transform-tools {
    display: flex;
    flex: 3 0 auto;
    gap: 9px;
}

.orient {
    width: 102px;
    padding: 0 6px 0 4px;
}

.orient select {
    padding-left: 5px;
}

.transform-tools .sq {
    color: #a0a0a0;
}

.dim .dark {
    color: #777;
    background: #3a3a3a;
}

.options {
    gap: 6px;
    padding: 0 4px 0 7px;
}

.mode {
    width: 140px;
    padding: 0 5px;
}

.mode select {
    padding-left: 5px;
}

.subheader .menus {
    margin-left: 7px;
    background: #2e2f36;
}

.display {
    display: flex;
    gap: 8px;
    margin-left: auto;
}

.display .sq {
    color: #aaa;
}

.display .on {
    color: #fff;
}

.display .xray {
    color: #666;
    background: #3c3c40;
}

.stage {
    position: relative;
    display: flex;
    align-items: flex-start;
    gap: 23px;
    padding: 13px 11px;
}

.toolbar {
    display: flex;
    flex-direction: column;
    gap: 6px;
}

.tools {
    border-radius: 5px;
    overflow: hidden;
    background: #2b2b2b;
}

.tools button {
    position: relative;
    width: 50px;
    height: 45px;
}

.tools svg {
    width: 32px;
    height: 32px;
}

.tools .tool-icon svg {
    width: 22px;
    height: 22px;
}

.more::after {
    content: "";
    position: absolute;
    right: 3px;
    bottom: 3px;
    border: 3px solid transparent;
    border-right-color: #999;
    border-bottom-color: #999;
}

.view-info {
    line-height: 24px;
    color: #fff;
    text-shadow: 0 1px 2px #111;
}

/* Timeline */
.timeline {
    height: 67px;
    overflow: hidden;
    background: #282828;
}

.timeline-header {
    display: flex;
    align-items: center;
    gap: 8px;
    height: 33px;
    padding: 2px 12px 0;
    background: #303030;
}

.playback {
    gap: 1px;
}

.playback .dark {
    gap: 5px;
    padding: 0 5px 0 7px;
    border-radius: 0;
}

.timeline-header .menus {
    margin-left: -5px;
}

.ruler {
    display: flex;
    align-items: center;
    height: 27px;
    padding: 5px 29px 0 43px;
    color: #a8a8a8;
}

.frame {
    width: 31px;
    height: 22px;
    border-radius: 4px;
    background: #5680c2;
    color: #fff;
    line-height: 22px;
    text-align: center;
}

.ticks {
    display: grid;
    grid-template-columns: repeat(25, 1fr);
    flex: 1;
    margin-left: 8px;
    text-align: center;
}

.scroll-row {
    display: flex;
    color: #888;
}

.scrollbar {
    flex: 1;
    height: 14px;
    border: 3px solid #5f5f5f;
    border-width: 0 3px;
    border-radius: 7px;
    background: #5f5f5f;
}

.next {
    transform: rotate(-90deg);
}

.prev {
    transform: rotate(90deg);
}

/* Outliner */
.right-area {
    display: flex;
    flex-direction: column;
    gap: 2px;
    width: 346px;
    flex: none;
}

.outliner {
    height: 422px;
    background: #282828;
    border-radius: 4px;
    overflow: hidden;
}

.outliner-header {
    display: flex;
    align-items: center;
    height: 32px;
    padding: 1px 20px 0 13px;
    background: #3a3a3a;
}

.outliner-header .dark + .dark {
    margin-left: 6px;
}

.search {
    display: flex;
    align-items: center;
    width: 147px;
    height: 24px;
    padding: 0 5px;
    border-radius: 4px;
    background: #1d1d1d;
}

.search input {
    flex: 1;
}

.outliner-header .search {
    margin: 0 auto 0 20px;
}

.rows {
    min-height: 390px;
    padding-top: 3px;
    background: repeating-linear-gradient(#282828 0 3px, #282828 3px 29px, #2c2c2c 29px 52px);
    background-size: 100% 52px;
}

.row {
    display: flex;
    align-items: center;
    height: 26px;
    padding: 0 13px 0 56px;
}

.row.root {
    padding-left: 30px;
    gap: 8px;
}

.row .name {
    min-width: 54px;
    margin-left: 8px;
}

.row.selected {
    background: #3d5587;
}

.badge,
.kinds {
    display: flex;
    gap: 5px;
    color: #de8b4a;
}

.badge {
    position: relative;
    padding: 2px 3px;
    border-radius: 4px;
    background: #505050;
}

.badge b {
    position: absolute;
    right: -3px;
    bottom: 0;
    font-size: 11px;
    line-height: 12px;
    font-weight: normal;
    color: #fff;
    background: #222;
}

.row input,
.prop-body input {
    appearance: none;
    width: 14px;
    height: 14px;
    border-radius: 2px;
    background: #dcdcdc;
}

.row input {
    position: relative;
    margin: 0 8px 0 auto;
}

.row input::after {
    content: "";
    position: absolute;
    left: 4px;
    top: 1px;
    width: 5px;
    height: 9px;
    border: solid #222;
    border-width: 0 2px 2px 0;
    transform: rotate(40deg);
}

/* Properties */
.properties {
    display: flex;
    flex-direction: column;
    flex: 1;
    background: #424242;
}

.prop-header {
    display: flex;
    align-items: center;
    justify-content: space-between;
    height: 32px;
    padding: 0 8px 0 95px;
    background: #393939;
}

.prop-header .dark {
    width: 28px;
    padding-left: 8px;
}

.prop-main {
    display: flex;
    flex: 1;
}

.prop-tabs {
    display: flex;
    align-items: flex-end;
    width: 37px;
    padding-left: 11px;
    background: #282828;
}

.texture {
    width: 18px;
    height: 14px;
    border: 1px solid #d9737f;
    background: repeating-conic-gradient(#d9737f 0 25%, #3a2529 0 50%) 0 0 / 8px 8px;
}

.prop-body {
    flex: 1;
}

.active-tool {
    display: flex;
    align-items: center;
    gap: 10px;
    height: 47px;
    padding-left: 20px;
}

.prop-body .modes {
    padding-left: 12px;
}

.prop-body h3,
.prop-body h4 {
    display: flex;
    align-items: center;
    font-size: 14px;
    font-weight: normal;
}

.prop-body h3 {
    justify-content: space-between;
    height: 31px;
    padding: 0 8px 0 31px;
}

.prop-body .modes + h3 {
    margin-top: 12px;
}

.prop-body h4 {
    height: 31px;
    padding-left: 47px;
    background: #393939;
}

.prop-body fieldset {
    position: relative;
    padding: 10px 0 10px 133px;
    border: none;
    background: #303030;
}

.prop-body legend {
    float: left;
    width: 55px;
    margin-left: -55px;
    line-height: 26px;
}

.prop-body label {
    display: flex;
    align-items: center;
    gap: 5px;
    height: 26px;
}

.prop-body input {
    width: 16px;
    height: 16px;
    background: #606060;
}

/* File browser */
.dialog {
    position: absolute;
    top: 154px;
    left: 299px;
    right: 255px;
    bottom: 26px;
    display: flex;
    flex-direction: column;
    border: 1px solid #8a6fb3;
    border-top: none;
    background: #444;
    box-shadow: 0 3px 14px rgba(0, 0, 0, .5);
}

.dialog .titlebar {
    height: 31px;
    background: #8763b4;
    color: #fff;
}

.dialog .controls button {
    width: 46px;
    height: 31px;
}

.browser {
    display: flex;
    flex: 1;
    min-height: 0;
}

.sidebar {
    width: 310px;
    flex: none;
    overflow: hidden;
    background: #424242;
}

.sidebar h2 {
    display: flex;
    align-items: center;
    height: 32px;
    padding: 0 9px 0 12px;
    background: #4b4b4b;
    color: #eee;
    font-size: 15px;
    font-weight: normal;
}

.sidebar h2::before {
    content: "";
    margin-right: 8px;
    border: 4px solid transparent;
    border-top: 9px solid #b5b5b5;
    border-bottom: none;
}

.sidebar h2 .grip {
    margin-left: auto;
}

.panel {
    padding: 11px 11px 11px 12px;
}

.favorites {
    padding-top: 10px;
}

.places {
    flex: 1;
    padding: 5px 5px 0;
    border-radius: 4px;
    background: #323232;
}

.places li {
    display: flex;
    align-items: center;
    height: 24px;
    margin-bottom: 2px;
    padding-left: 3px;
    border-radius: 3px;
    white-space: pre;
}

.places li svg:not(.grip),
.font-icon {
    width: 18px;
    height: 18px;
    margin-right: 11px;
}

.font-icon {
    font: bold 24px/18px "Liberation Serif", serif;
    text-align: center;
}

.places .selected {
    background: #6b6d78;
    color: #fff;
}

.places .missing {
    color: #848484;
}

.places .resize {
    justify-content: center;
    height: 17px;
    margin: 0;
    padding: 0;
}

.resize::before {
    content: "";
    margin: 0 auto 7px 8px;
    border: 4px solid transparent;
    border-left: 8px solid #aaa;
    border-right: none;
}

.resize .grip {
    margin: 0 auto 7px 8px;
}

.bookmark {
    position: relative;
    width: 100%;
    height: 24px;
    padding: 0 5px;
    border-radius: 3px;
    background: #565656;
}

.bookmark span {
    flex: 1;
}

.recent {
    display: flex;
    align-items: flex-start;
    gap: 12px;
}

.clear {
    width: 24px;
    height: 24px;
    border-radius: 4px;
    background: #595959;
}

/* File area */
.files {
    display: flex;
    flex-direction: column;
    flex: 1;
    min-width: 0;
}

.path-bar {
    display: flex;
    align-items: center;
    gap: 12px;
    height: 53px;
    padding: 0 10px 0 11px;
    background: #4a4a4a;
}

.path-bar button {
    width: 32px;
    height: 31px;
    background: #595959;
}

.path-bar .nav {
    gap: 1px;
}

.path-bar > button {
    border-radius: 4px;
}

.path-bar .on {
    background: #5680c2;
}

.path-bar .drop {
    background: #2b2b2b;
}

.path {
    flex: 1;
    height: 31px;
    padding: 0 9px 2px;
    border-radius: 4px;
    background: #1d1d1d;
}

.path-bar .search {
    width: 160px;
    height: 31px;
}

.file-grid {
    position: relative;
    display: flex;
    align-items: flex-start;
    flex: 1;
    padding: 13px 0 0 2px;
    background: #282828;
}

.file-grid figure {
    width: 194px;
    text-align: center;
}

.thumb {
    position: relative;
    width: 167px;
    height: 167px;
    margin: 0 auto 7px;
}

.thumb svg {
    width: 167px;
    height: 167px;
}

.blend {
    padding: 38px 4px;
    border: 1px solid #8c8c8c;
    background: #191919;
}

.preview {
    height: 88px;
    background: #272727;
}

.blend svg {
    position: absolute;
    left: 3px;
    bottom: 3px;
    width: 21px;
    height: 21px;
    color: #aaa;
}

.region {
    position: absolute;
    top: 18px;
    right: 0;
    width: 12px;
    height: 22px;
    background: #1f1f1f;
    color: #999;
}

.region svg {
    transform: rotate(90deg);
}

.save-bar {
    display: flex;
    align-items: center;
    gap: 12px;
    height: 53px;
    padding: 0 11px;
    background: #444;
}

.filename {
    display: flex;
    align-items: center;
    flex: 1;
    height: 31px;
    padding: 0 4px 0 9px;
    border-radius: 4px;
    background: #781012;
    color: #f0d6d6;
}

.filename input {
    flex: 1;
}

.filename button {
    width: 27px;
}

.save,
.cancel {
    width: 158px;
    height: 31px;
    border-radius: 4px;
    background: #595959;
}

.save {
    background: #5680c2;
    color: #fff;
}

.expand {
    position: absolute;
    right: 23px;
    bottom: -2px;
    color: #999;
    transform: rotate(180deg);
}

.pointer {
    position: absolute;
    top: 880px;
    left: 905px;
    width: 12px;
    height: 20px;
}
```
